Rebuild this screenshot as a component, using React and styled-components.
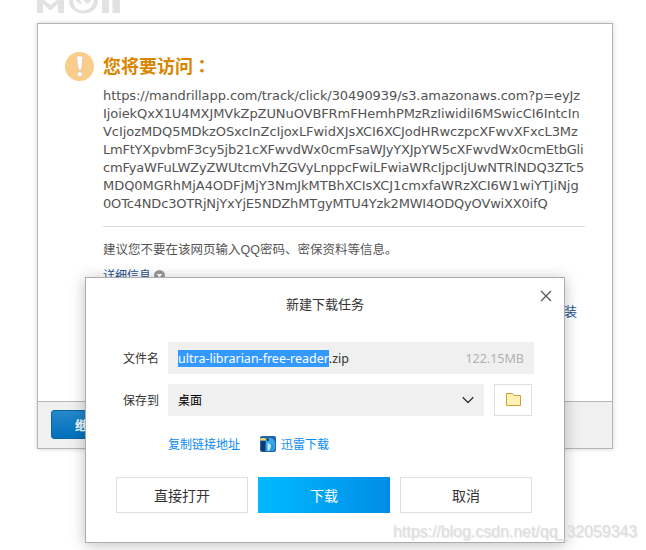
import styled, { createGlobalStyle } from "styled-components";

const urlLines = [
  { text: "https://mandrillapp.com/track/click/30490939/s3.amazonaws.com?p=eyJz", spacing: -0.08 },
  { text: "IjoiekQxX1U4MXJMVkZpZUNuOVBFRmFHemhPMzRzIiwidiI6MSwicCI6IntcIn", spacing: -0.08 },
  { text: "VcIjozMDQ5MDkzOSxcInZcIjoxLFwidXJsXCI6XCJodHRwczpcXFwvXFxcL3Mz", spacing: -0.06 },
  { text: "LmFtYXpvbmF3cy5jb21cXFwvdWx0cmFsaWJyYXJpYW5cXFwvdWx0cmEtbGli", spacing: -0.235 },
  { text: "cmFyaWFuLWZyZWUtcmVhZGVyLnppcFwiLFwiaWRcIjpcIjUwNTRlNDQ3ZTc5", spacing: -0.14 },
  { text: "MDQ0MGRhMjA4ODFjMjY3NmJkMTBhXCIsXCJ1cmxfaWRzXCI6W1wiYTJiNjg", spacing: -0.035 },
  { text: "0OTc4NDc3OTRjNjYxYjE5NDZhMTgyMTU4Yzk2MWI4ODQyOVwiXX0ifQ", spacing: -0.175 },
];

const GlobalStyle = createGlobalStyle`
  * {
    box-sizing: border-box;
  }

  body {
    margin: 0;
    background: #fff;
    font-family: "Noto Sans", "Noto Sans CJK SC", sans-serif;
  }

  button {
    font-family: inherit;
    padding: 0;
    border-radius: 0;
  }
`;

const Page = styled.div`
  position: relative;
  width: 646px;
  height: 550px;
  overflow: hidden;
`;

const Header = styled.header`
  height: 23px;
  padding-left: 37px;

  svg {
    display: block;
  }
`;

/* -------- Warning page -------- */

const Card = styled.main`
  display: flex;
  flex-direction: column;
  width: 576px;
  height: 426px;
  margin-left: 37px;
  border: 1px solid #b5b5b5;
  background: #fff;
  box-shadow: 0 0 5px rgba(0, 0, 0, 0.17);
`;

const CardBody = styled.section`
  flex: 1;
  padding: 27px 27px 0;
`;

const Heading = styled.div`
  display: flex;
  align-items: center;
  gap: 9px;
  height: 30px;
`;

const Title = styled.h1`
  margin: 0 0 2px;
  color: #d98500;
  font: 700 18px/28px "Noto Sans CJK SC", sans-serif;
`;

// the TC face centres the full-width colon in its cell
const Colon = styled.span`
  font-family: "Noto Sans CJK TC", sans-serif;
`;

const Content = styled.div`
  padding-left: 38px;
`;

const Url = styled.div`
  height: 146px;
  padding-top: 6px;
  border-bottom: 1px solid #dcdcdc;
  color: #535353;
`;

const UrlLine = styled.div`
  height: 18px;
  font: 13px/18px "DejaVu Sans", sans-serif;
  letter-spacing: ${(p) => p.$spacing}px;
  white-space: nowrap;
`;

const Advice = styled.p`
  margin: 13px 0 0;
  color: #555;
  font: 12.5px/20px "Liberation Sans", "Noto Sans CJK SC", sans-serif;
`;

const Details = styled.a`
  display: flex;
  align-items: center;
  gap: 3px;
  height: 20px;
  margin-top: 5px;
  color: #1e5494;
  font: 12px/20px "Noto Sans CJK SC", sans-serif;
`;

const InstallLink = styled.div`
  margin: 16px 8px 0 0;
  color: #1e5494;
  font: 13px/20px "Noto Sans CJK SC", sans-serif;
  text-align: right;
`;

const CardFooter = styled.footer`
  height: 47px;
  padding: 8px 13px;
  border-top: 1px solid #b5b5b5;
  background: #f0f0f0;
`;

const ContinueButton = styled.button`
  width: 100px;
  height: 29px;
  border: 1px solid #0865a4;
  border-radius: 3px;
  background: linear-gradient(#2588ca, #0070bd);
  color: #fff;
  font-size: 13px;
  font-weight: 700;
`;

/* -------- Download dialog -------- */

const Dialog = styled.div`
  position: absolute;
  left: 85px;
  top: 277px;
  width: 480px;
  height: 266px;
  padding: 64px 30px 29px;
  display: flex;
  flex-direction: column;
  border: 1px solid #acacac;
  background: #fff;
  box-shadow: 0 2px 14px rgba(0, 0, 0, 0.25);
`;

const DialogTitle = styled.h2`
  position: absolute;
  top: 16px;
  left: 0;
  width: 100%;
  margin: 0;
  color: #333;
  font: 400 13px/20px "Noto Sans CJK SC", sans-serif;
  text-align: center;
`;

const CloseButton = styled.button`
  position: absolute;
  top: 12px;
  right: 12px;
  width: 12px;
  height: 12px;
  border: 0;
  background: none;

  svg {
    display: block;
  }
`;

const Row = styled.div`
  display: flex;
  align-items: center;
  height: 32px;
  margin-bottom: 10px;
  padding-left: 7px;
`;

const Label = styled.label`
  width: 45px;
  color: #333;
  font: 12px/20px "Noto Sans CJK SC", sans-serif;
`;

const Field = styled.div`
  display: flex;
  align-items: center;
  justify-content: space-between;
  width: ${(p) => p.$width}px;
  height: 32px;
  padding: 0 10px;
  background: #f0f0f0;
  color: ${(p) => p.$color || "#333"};
  font-size: 12px;
`;

const FileName = styled.span`
  display: flex;
  height: 17px;
  font-size: 12.5px;
  line-height: 17px;
`;

const Selected = styled.span`
  background: #3399ff;
  color: #fff;
`;

const FileSize = styled.span`
  color: #b2b2b2;
  font-size: 12.5px;
`;

const FolderButton = styled.button`
  display: flex;
  align-items: center;
  justify-content: center;
  width: 38px;
  height: 32px;
  margin-left: 10px;
  border: 1px solid #dfdfdf;
  background: #fff;
`;

const Links = styled.div`
  display: flex;
  align-items: center;
  height: 20px;
  padding-left: 52px;
  margin-top: 8px;
`;

const Link = styled.a`
  color: #0b8bf2;
  font: 12px/20px "Noto Sans CJK SC", sans-serif;

  & + svg {
    margin: 0 5px 0 20px;
  }
`;

const Actions = styled.div`
  display: flex;
  gap: 10px;
  margin-top: auto;
`;

const ActionButton = styled.button`
  width: 132px;
  height: 36px;
  border: ${(p) => (p.$primary ? "0" : "1px solid #dfdfdf")};
  background: ${(p) => (p.$primary ? "linear-gradient(90deg, #00baff, #008de8)" : "#fff")};
  color: ${(p) => (p.$primary ? "#fff" : "#333")};
  font: 14px/20px "Noto Sans CJK SC", sans-serif;
`;

const Watermark = styled.div`
  position: absolute;
  left: 393px;
  top: 522px;
  color: rgba(220, 220, 220, 0.9);
  font: 16px/20px "Liberation Sans", sans-serif;
  letter-spacing: -0.04px;
  white-space: nowrap;
  text-shadow: 1px 1px 1px rgba(190, 190, 190, 0.4);
`;

/* -------- Icons -------- */

const MailLogo = () => (
  <svg width="90" height="16" viewBox="0 0 90 16">
    <path
      d="M0 0h7l6.500 5L20 0h7v13h-6V4l-7.500 6.500L6 4v9H0zM65 0h7v13h-7zM75.500 0h7.500v13h-7.500z"
      fill="#e2e2e2"
    />
    <path d="M32 0h29c0 8-6 13.500-14.500 13.500S32 8 32 0z" fill="#e2e2e2" />
    <path d="M36 0c0 7 4.500 10.500 10 10.500S56 7 57 0h-3c-1 3-3 4-5 3l-3-3h-3l2 4c-3 0-5-2-6-4z" fill="#fff" />
  </svg>
);

const WarningIcon = () => (
  <svg width="29" height="29" viewBox="0 0 29 29">
    <circle cx="14.500" cy="14.500" r="14.500" fill="#fbcd8b" />
    <path d="M11.600 5.500q0-1.500 1.500-1.500h3.300q1.500 0 1.500 1.500l-1.600 12.500h-3z" fill="#fff" stroke="#dcc0ae" strokeWidth=".6" />
    <circle cx="14.800" cy="22.300" r="2.500" fill="#fff" stroke="#dcc0ae" strokeWidth=".6" />
  </svg>
);

const ArrowDot = () => (
  <svg width="11" height="11" viewBox="0 0 11 11">
    <circle cx="5.500" cy="5.500" r="5.500" fill="#999" />
    <path d="M2.500 4h6l-3 3.500z" fill="#fff" />
  </svg>
);

const FolderIcon = () => (
  <svg width="16" height="14" viewBox="0 0 16 14">
    <path d="M1.500.5h6l1.500 2h6.500v10h-14z" fill="#fff2b3" stroke="#cb9f3c" />
  </svg>
);

const ThunderIcon = () => (
  <svg width="16" height="16" viewBox="0 0 16 16">
    <rect width="16" height="16" rx="2" fill="#2362ad" />
    <path d="M1 5h4v10H2q-1 0-1-1z" fill="#123c70" />
    <path d="M6 15V6q0-4 5-4 4 1 4 6v4q0 3-3 3z" fill="#39a9e8" />
    <path d="M8 15q-1-6 0-8 4 1 5 8z" fill="#b7eafa" />
    <path d="M9 15q3-4 2-9 4 3 3 7-1 2-2 2z" fill="#2b97de" />
    <path d="M0 2.500q4-1 6 0v2H0z" fill="#f4dc61" />
    <circle cx="8" cy="4" r="1" fill="#102d57" />
  </svg>
);

export default function App() {
  return (
    <Page>
      <GlobalStyle />
      <Header>
        <MailLogo />
      </Header>
      <Card>
        <CardBody>
          <Heading>
            <WarningIcon />
            <Title>
              您将要访问<Colon lang="zh-TW">：</Colon>
            </Title>
          </Heading>
          <Content>
            <Url>
              {urlLines.map((line) => (
                <UrlLine key={line.text} $spacing={line.spacing}>{line.text}</UrlLine>
              ))}
            </Url>
            <Advice>建议您不要在该网页输入QQ密码、密保资料等信息。</Advice>
            <Details>
              详细信息 <ArrowDot />
            </Details>
            <InstallLink>装</InstallLink>
          </Content>
        </CardBody>
        <CardFooter>
          <ContinueButton>继续访问</ContinueButton>
        </CardFooter>
      </Card>

      <Dialog>
        <DialogTitle>新建下载任务</DialogTitle>
        <CloseButton aria-label="关闭">
          <svg width="12" height="12" viewBox="0 0 12 12">
            <path d="M1 1l10 10M11 1L1 11" stroke="#555" strokeWidth="1.200" />
          </svg>
        </CloseButton>
        <Row>
          <Label>文件名</Label>
          <Field $width={366}>
            <FileName>
              <Selected>ultra-librarian-free-reader</Selected>.zip
            </FileName>
            <FileSize>122.15MB</FileSize>
          </Field>
        </Row>
        <Row>
          <Label>保存到</Label>
          <Field $width={316} $color="#000">
            桌面
            <svg width="12" height="8" viewBox="0 0 12 8">
              <path d="M.7 1.200L6 6.500l5.300-5.300" fill="none" stroke="#333" strokeWidth="1.300" />
            </svg>
          </Field>
          <FolderButton aria-label="浏览">
            <FolderIcon />
          </FolderButton>
        </Row>
        <Links>
          <Link>复制链接地址</Link>
          <ThunderIcon />
          <Link>迅雷下载</Link>
        </Links>
        <Actions>
          <ActionButton>直接打开</ActionButton>
          <ActionButton $primary>下载</ActionButton>
          <ActionButton>取消</ActionButton>
        </Actions>
      </Dialog>
      <Watermark>https://blog.csdn.net/qq_32059343</Watermark>
    </Page>
  );
}
